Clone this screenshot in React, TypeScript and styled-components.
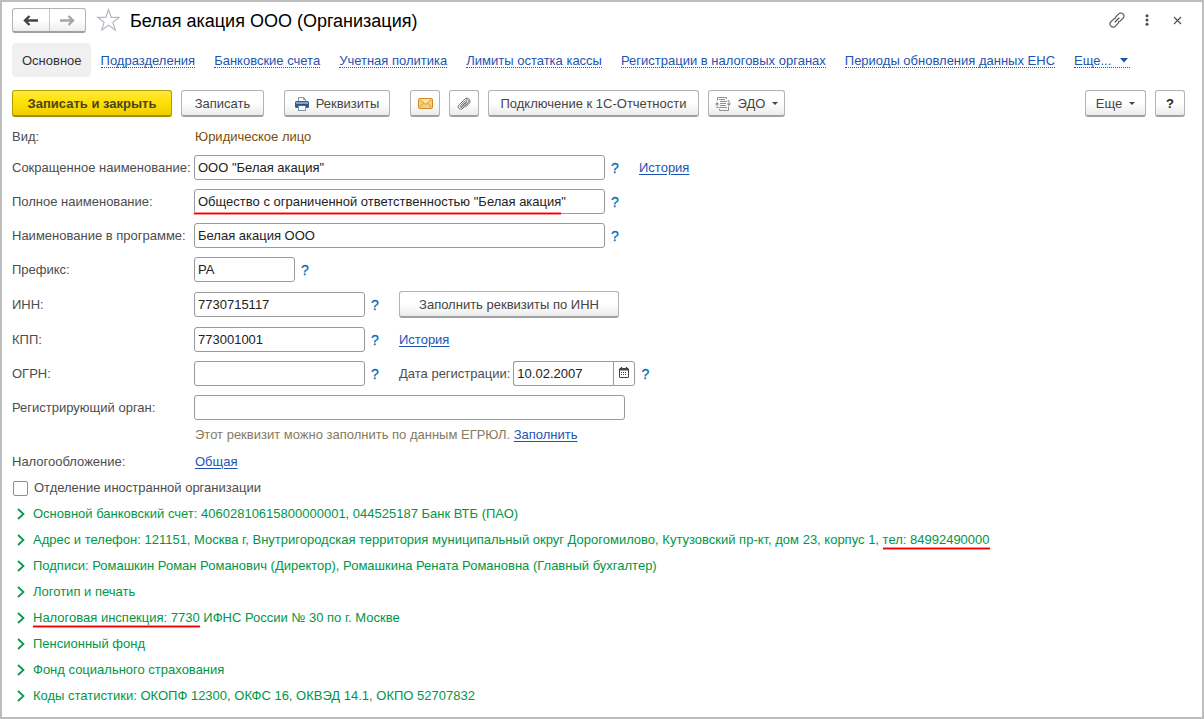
import React from 'react';
import styled, { createGlobalStyle, css } from 'styled-components';

const GlobalStyle = createGlobalStyle`
  *, *::before, *::after { box-sizing: border-box; }
  body {
    margin: 0;
    background: #fff;
    color: #4d4d4d;
    font: 13px/16px "Liberation Sans", Arial, sans-serif;
  }
  button, input { font: inherit; color: inherit; margin: 0; }
  svg { display: block; flex: none; }
`;

const Window = styled.main`
  min-height: 100vh;
  border: 2px solid #bdbdbd;
  padding: 6px 17px 7px 10px;
`;

const TitleBar = styled.header`
  display: flex;
  align-items: flex-start;
  height: 26px;
`;

const NavGroup = styled.div`
  display: flex;
  width: 74px;
  height: 25px;
  border: 1px solid #b3b3b3;
  border-bottom: 2px solid #a0a0a0;
  border-radius: 3px;
  background: linear-gradient(#fff 50%, #ededed);
`;

const NavButton = styled.button`
  flex: 1;
  display: flex;
  align-items: center;
  justify-content: center;
  padding: 0;
  border: 0;
  background: none;
  color: #444;
  & + & { border-left: 1px solid #c8c8c8; color: #a6a6a6; }
`;

const IconButton = styled.button`
  display: flex;
  align-items: center;
  justify-content: center;
  width: 30px;
  height: 24px;
  padding: 0;
  border: 0;
  background: none;
  color: #4d4d4d;
`;

const StarButton = styled(IconButton)`
  width: 24px;
  margin: 0 10px;
`;

const Title = styled.h1`
  flex: 1;
  margin: 0;
  color: #000;
  font-size: 18px;
  line-height: 26px;
  font-weight: 400;
`;

const WindowTools = styled.div`
  display: flex;
  margin-right: -7px;
`;

const Tabs = styled.nav`
  display: flex;
  align-items: center;
  margin-top: 9px;
  height: 34px;
`;

const Tab = styled.a<{ $active?: boolean }>`
  display: flex;
  align-items: center;
  height: 34px;
  padding: 2px 9px 0 10px;
  color: #1c54b4;
  text-decoration: none;
  white-space: nowrap;
  ${p => p.$active && css`
    border-radius: 4px;
    background: #f0f0f0;
    color: #333;
  `}
`;

const TabText = styled.span`
  display: flex;
  align-items: center;
  gap: 8px;
  height: 14px;
  border-bottom: 1px dotted #1c54b4;
`;

const Toolbar = styled.div`
  display: flex;
  justify-content: space-between;
  margin-top: 13px;
`;

const ToolbarSide = styled.div`
  display: flex;
  gap: 20px;
`;

const ToolbarGroup = styled.div`
  display: flex;
  gap: 9px;
`;

const Button = styled.button<{ $width: number; $primary?: boolean; $strong?: boolean }>`
  display: flex;
  align-items: center;
  justify-content: center;
  gap: 7px;
  width: ${p => p.$width}px;
  height: 27px;
  padding: 1px 0 0;
  border: 1px solid #b3b3b3;
  border-bottom: 2px solid #a0a0a0;
  border-radius: 3px;
  background: linear-gradient(#fff 50%, #ebebeb);
  color: #444;
  white-space: nowrap;
  ${p => p.$strong && css`
    color: #222;
    font-weight: 700;
  `}
  ${p => p.$primary && css`
    border-color: #b09d00;
    border-bottom-color: #a39000;
    background: linear-gradient(#ffea3d, #ffe000 50%, #ecce00);
    color: #4a4420;
    font-weight: 700;
  `}
`;

const Form = styled.form`
  display: flex;
  flex-direction: column;
`;

const Fields = styled.div`
  display: flex;
  flex-direction: column;
  gap: 9px;
`;

const Row = styled.div<{ $height: number }>`
  display: grid;
  grid-template-columns: 182px 1fr;
  align-items: center;
  min-height: ${p => p.$height}px;
`;

const KindRow = styled(Row)`
  padding-top: 2px;
`;

const Label = styled.label`
  white-space: nowrap;
`;

const Cell = styled.div`
  display: flex;
  align-items: center;
`;

const TextCell = styled.div<{ $color?: string }>`
  padding-left: 1px;
  color: ${p => p.$color};
`;

const InputWrap = styled.div<{ $width: number }>`
  position: relative;
  display: flex;
  width: ${p => p.$width}px;
  height: 25px;
`;

const Input = styled.input`
  flex: 1;
  min-width: 0;
  height: 25px;
  padding: 0 3px;
  border: 1px solid #999;
  border-radius: 3px;
  background: #fff;
  color: #222;
`;

const DateInput = styled(Input)`
  border-right: 0;
  border-radius: 3px 0 0 3px;
`;

const CalendarButton = styled.button`
  display: flex;
  align-items: center;
  justify-content: center;
  width: 22px;
  padding: 0 0 3px;
  border: 1px solid #999;
  border-radius: 0 3px 3px 0;
  background: #fff;
  color: #444;
`;

const redMark = css`
  position: absolute;
  height: 3px;
  border: solid #ff8a8a;
  border-width: 1px 0;
  background: #f00000;
`;

const FieldMark = styled.span`
  ${redMark}
  left: 0;
  bottom: -1px;
  width: 367px;
`;

const Marked = styled.span`
  position: relative;
  &::after {
    ${redMark}
    content: '';
    left: 0;
    right: 0;
    bottom: -3px;
  }
`;

const Help = styled.button`
  width: 8px;
  margin: 0 20px 0 6px;
  padding: 0;
  border: 0;
  background: none;
  color: #0072bc;
  font-size: 14px;
  -webkit-text-stroke: 0.3px currentColor;
`;

const Link = styled.a`
  color: #1c54b4;
  text-decoration: underline;
  text-underline-offset: 2px;
`;

const DateLabel = styled(Label)`
  margin-right: 3px;
`;

const CheckRow = styled.label`
  display: flex;
  align-items: center;
  gap: 6px;
  height: 26px;
  padding-left: 1px;
`;

const Checkbox = styled.input`
  appearance: none;
  width: 15px;
  height: 15px;
  border: 1px solid #8f8f8f;
  border-radius: 2px;
  background: #fff;
`;

const Section = styled.button`
  display: flex;
  align-items: center;
  gap: 8px;
  height: 26px;
  padding: 0 0 0 5px;
  border: 0;
  background: none;
  color: #009646;
  text-align: left;
  white-space: nowrap;
`;

const ArrowIcon = ({ right = false }: { right?: boolean }) => (
  <svg width="15" height="11" viewBox="0 0 15 11" fill="none" stroke="currentColor" strokeWidth="2.4">
    {right ? (
      <path d="M0 5.5H12M8.5 1L13 5.5L8.5 10" />
    ) : (
      <path d="M15 5.5H3M6.5 1L2 5.5L6.5 10" />
    )}
  </svg>
);

const StarIcon = () => (
  <svg width="24" height="24" viewBox="0 0 24 24" fill="none" stroke="#b4bac2" strokeWidth="1.2">
    <path d="M12.5 1.5L15.2 9.3H23.3L16.9 14.2L19.3 22L12.5 17.3L5.7 22L8.1 14.2L1.7 9.3H9.8Z" />
  </svg>
);

const ChainIcon = () => (
  <svg width="16" height="16" viewBox="0 0 16 16" fill="none" stroke="currentColor" strokeWidth="1.1" strokeLinecap="round">
    <path d="M6.3 5.3L9.6 1.9C10.9 .6 12.7 .6 14 1.9C15.3 3.2 15.3 5 14 6.3L11.4 8.9C10.8 9.5 10.2 9.8 9.5 9.8" />
    <path d="M9.7 10.7L6.4 14.1C5.1 15.4 3.3 15.4 2 14.1C.7 12.8 .7 11 2 9.7L4.6 7.1C5.2 6.5 5.8 6.2 6.5 6.2" />
    <path d="M6 10L10 6" />
  </svg>
);

const DotsIcon = () => (
  <svg width="4" height="12" viewBox="0 0 4 12" fill="currentColor">
    <circle cx="2" cy="1.7" r="1.5" /><circle cx="2" cy="6" r="1.5" /><circle cx="2" cy="10.3" r="1.5" />
  </svg>
);

const CloseIcon = () => (
  <svg width="9" height="9" viewBox="0 0 9 9" stroke="currentColor" strokeWidth="1.1">
    <path d="M1 1L8 8M8 1L1 8" />
  </svg>
);

const PrinterIcon = () => (
  <svg width="14" height="14" viewBox="0 0 14 14">
    <path d="M3.5 5V.5H8.5L10.5 2.5V5" fill="#fff" stroke="#7f95ab" />
    <path d="M8.5 .5V2.5H10.5" fill="none" stroke="#7f95ab" />
    <rect x="0" y="4" width="14" height="7" rx="1.5" fill="#2f5f8f" />
    <rect x="1" y="5" width="12" height="2" fill="#7da5cb" />
    <rect x="3.5" y="8.5" width="7" height="5" fill="#fff" stroke="#7f95ab" />
    <path d="M3 8H11" stroke="#1f4468" />
  </svg>
);

const MailIcon = () => (
  <svg width="15" height="11" viewBox="0 0 15 11" fill="none">
    <rect x=".5" y=".5" width="14" height="10" rx="1" fill="#f6cd78" stroke="#cf8a24" />
    <path d="M2 1H13L7.5 5.5Z" fill="#fde3a6" />
    <path d="M1.5 1.5L7.5 6.5L13.5 1.5M1.5 9.5L5.5 5M13.5 9.5L9.5 5" stroke="#d99a3c" strokeWidth=".9" />
  </svg>
);

const ClipIcon = () => (
  <svg width="14" height="14" viewBox="0 0 14 14" fill="none" stroke="#6a6a6a" strokeWidth="1" strokeLinecap="round">
    <path d="M4.6 9.4L9.2 4.8C9.8 4.2 10.5 4.9 9.9 5.5L5.2 10.2C4.2 11.2 2.6 9.7 3.7 8.5L8.8 3.4C10.4 1.9 12.8 4.2 11.2 5.9L5.8 11.3" />
    <path d="M5.8 11.3C3.2 13.9 -.5 10.6 2.1 7.8L7.9 2C10.6 -.5 14.8 3.4 12.2 6.4L8.6 10" />
  </svg>
);

const ExchangeIcon = () => (
  <svg width="16" height="14" viewBox="0 0 16 14" fill="none" stroke="#8e8e8e">
    <path d="M2.5 3.5V.5H11.5V2M4.5 12V13.5H13.5V9.5" />
    <path d="M4 2.5H10M5 4.5H12M5 6.5H11M5 8.5H11M4 10.5H12" />
    <path d="M2 6V10.5H3.5M14 7V3.5H12.5" />
    <path d="M0 7.5L2 5L4.5 7.5ZM11.5 6.5H16L14 9Z" fill="#8e8e8e" stroke="none" />
  </svg>
);

const CalendarIcon = () => (
  <svg width="10" height="11" viewBox="0 0 10 11" fill="none" stroke="currentColor">
    <path d="M2.5 0V2M7.5 0V2" strokeWidth="1.4" />
    <rect x=".5" y="1.5" width="9" height="9" rx=".5" />
    <path d="M1 2.5H9" strokeWidth="2" />
    <path d="M2 5.5H8M2 7.5H8" strokeDasharray="1 1" />
  </svg>
);

const CaretIcon = ({ wide = false }: { wide?: boolean }) =>
  wide ? (
    <svg width="11" height="5" viewBox="0 0 11 5"><path d="M1 0H9L5 4.5Z" fill="currentColor" /></svg>
  ) : (
    <svg width="6" height="3" viewBox="0 0 6 3"><path d="M0 0H6L3 3Z" fill="currentColor" /></svg>
  );

const ChevronIcon = () => (
  <svg width="8" height="12" viewBox="0 0 8 12" fill="none" stroke="currentColor" strokeWidth="1.7">
    <path d="M1 1L6.5 6L1 11" />
  </svg>
);

const tabs = [
  'Подразделения',
  'Банковские счета',
  'Учетная политика',
  'Лимиты остатка кассы',
  'Регистрации в налоговых органах',
  'Периоды обновления данных ЕНС',
];

const sections: { text: string; marked?: string; tail?: string }[] = [
  { text: 'Основной банковский счет: 40602810615800000001, 044525187 Банк ВТБ (ПАО)' },
  {
    text: 'Адрес и телефон: 121151, Москва г, Внутригородская территория муниципальный округ Дорогомилово, Кутузовский пр-кт, дом 23, корпус 1, ',
    marked: 'тел: 84992490000',
  },
  { text: 'Подписи: Ромашкин Роман Романович (Директор), Ромашкина Рената Романовна (Главный бухгалтер)' },
  { text: 'Логотип и печать' },
  { text: '', marked: 'Налоговая инспекция: 7730', tail: ' ИФНС России № 30 по г. Москве' },
  { text: 'Пенсионный фонд' },
  { text: 'Фонд социального страхования' },
  { text: 'Коды статистики: ОКОПФ 12300, ОКФС 16, ОКВЭД 14.1, ОКПО 52707832' },
];

interface FieldProps {
  id: string;
  label: string;
  value?: string;
  width: number;
  help?: boolean;
  marked?: boolean;
  height?: number;
  children?: React.ReactNode;
}

const Field = ({ id, label, value = '', width, help = true, marked, height = 25, children }: FieldProps) => (
  <Row $height={height}>
    <Label htmlFor={id}>{label}</Label>
    <Cell>
      <InputWrap $width={width}>
        <Input id={id} type="text" defaultValue={value} />
        {marked && <FieldMark />}
      </InputWrap>
      {help && <Help type="button">?</Help>}
      {children}
    </Cell>
  </Row>
);

export default function App() {
  return (
    <>
      <GlobalStyle />
      <Window>
        <TitleBar>
          <NavGroup>
            <NavButton type="button" aria-label="Назад"><ArrowIcon /></NavButton>
            <NavButton type="button" aria-label="Вперед"><ArrowIcon right /></NavButton>
          </NavGroup>
          <StarButton type="button" aria-label="Избранное"><StarIcon /></StarButton>
          <Title>Белая акация ООО (Организация)</Title>
          <WindowTools>
            <IconButton type="button" aria-label="Ссылка"><ChainIcon /></IconButton>
            <IconButton type="button" aria-label="Меню"><DotsIcon /></IconButton>
            <IconButton type="button" aria-label="Закрыть"><CloseIcon /></IconButton>
          </WindowTools>
        </TitleBar>

        <Tabs>
          <Tab href="#" $active>Основное</Tab>
          {tabs.map(t => (
            <Tab href="#" key={t}><TabText>{t}</TabText></Tab>
          ))}
          <Tab href="#"><TabText>Еще...<CaretIcon wide /></TabText></Tab>
        </Tabs>

        <Toolbar>
          <ToolbarSide>
            <ToolbarGroup>
              <Button type="button" $width={160} $primary>Записать и закрыть</Button>
              <Button type="button" $width={83}>Записать</Button>
            </ToolbarGroup>
            <Button type="button" $width={106}><PrinterIcon />Реквизиты</Button>
            <ToolbarGroup>
              <Button type="button" $width={30} aria-label="Письмо"><MailIcon /></Button>
              <Button type="button" $width={30} aria-label="Файлы"><ClipIcon /></Button>
              <Button type="button" $width={211}>Подключение к 1С-Отчетности</Button>
              <Button type="button" $width={77}><ExchangeIcon />ЭДО<CaretIcon /></Button>
            </ToolbarGroup>
          </ToolbarSide>
          <ToolbarGroup>
            <Button type="button" $width={61}>Еще<CaretIcon /></Button>
            <Button type="button" $width={30} $strong>?</Button>
          </ToolbarGroup>
        </Toolbar>

        <Form>
          <KindRow $height={38}>
            <span>Вид:</span>
            <TextCell $color="#7a4d0c">Юридическое лицо</TextCell>
          </KindRow>
          <Fields>
            <Field id="short" label="Сокращенное наименование:" value={'ООО "Белая акация"'} width={411}>
              <Link href="#">История</Link>
            </Field>
            <Field id="full" label="Полное наименование:" value={'Общество с ограниченной ответственностью "Белая акация"'} width={411} marked />
            <Field id="name" label="Наименование в программе:" value="Белая акация ООО" width={411} />
            <Field id="prefix" label="Префикс:" value="РА" width={101} />
            <Field id="inn" label="ИНН:" value="7730715117" width={171} height={27}>
              <Button type="button" $width={220}>Заполнить реквизиты по ИНН</Button>
            </Field>
            <Field id="kpp" label="КПП:" value="773001001" width={171}>
              <Link href="#">История</Link>
            </Field>
            <Field id="ogrn" label="ОГРН:" width={171}>
              <DateLabel htmlFor="date">Дата регистрации:</DateLabel>
              <InputWrap $width={122}>
                <DateInput id="date" type="text" defaultValue="10.02.2007" />
                <CalendarButton type="button" aria-label="Календарь"><CalendarIcon /></CalendarButton>
              </InputWrap>
              <Help type="button">?</Help>
            </Field>
            <Field id="organ" label="Регистрирующий орган:" width={431} help={false} />
          </Fields>
          <Row $height={29}>
            <span />
            <TextCell $color="#857a60">
              Этот реквизит можно заполнить по данным ЕГРЮЛ. <Link href="#">Заполнить</Link>
            </TextCell>
          </Row>
          <Row $height={26}>
            <span>Налогообложение:</span>
            <TextCell><Link href="#">Общая</Link></TextCell>
          </Row>
          <CheckRow>
            <Checkbox type="checkbox" />
            Отделение иностранной организации
          </CheckRow>
          {sections.map(s => (
            <Section type="button" aria-expanded={false} key={s.text + (s.marked ?? '')}>
              <ChevronIcon />
              <span>{s.text}{s.marked && <Marked>{s.marked}</Marked>}{s.tail}</span>
            </Section>
          ))}
        </Form>
      </Window>
    </>
  );
}
